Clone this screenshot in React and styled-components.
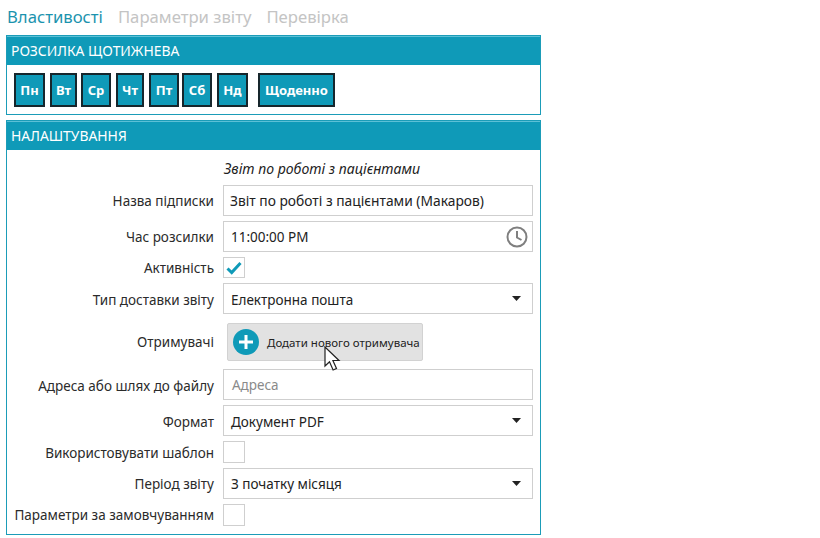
import React from 'react'
import styled, { createGlobalStyle } from 'styled-components'

const days = [
  { name: 'Пн', width: 31, gap: 5 },
  { name: 'Вт', width: 27, gap: 4 },
  { name: 'Ср', width: 30, gap: 5 },
  { name: 'Чт', width: 28, gap: 5 },
  { name: 'Пт', width: 30, gap: 3 },
  { name: 'Сб', width: 30, gap: 5 },
  { name: 'Нд', width: 31, gap: 10 },
]

const Caret = () => (
  <CaretIcon width="9" height="5" viewBox="0 0 10 6" preserveAspectRatio="none">
    <path d="M0 0h10L5 6z" fill="#222" />
  </CaretIcon>
)

const ClockIcon = () => (
  <ClockWrap width="22" height="22" viewBox="0 0 22 22" fill="none" stroke="#7f7f7f" strokeWidth="2">
    <circle cx="11" cy="11" r="9.5" />
    <path d="M11 5v6.5l4.5 2.5" />
  </ClockWrap>
)

const App = () => {
  return (
    <Page>
      <GlobalStyle />
      <Tabs>
        <Tab $active>Властивості</Tab>
        <Tab>Параметри звіту</Tab>
        <Tab>Перевірка</Tab>
      </Tabs>

      <Panel>
        <PanelHeader>РОЗСИЛКА ЩОТИЖНЕВА</PanelHeader>
        <DayRow>
          {days.map(day => (
            <DayBtn key={day.name} $width={day.width} $gap={day.gap}>{day.name}</DayBtn>
          ))}
          <DayBtn $width={77}>Щоденно</DayBtn>
        </DayRow>
      </Panel>

      <Panel>
        <PanelHeader>НАЛАШТУВАННЯ</PanelHeader>
        <Form>
          <Subtitle>Звіт по роботі з пацієнтами</Subtitle>

          <Row>
            <Label>Назва підписки</Label>
            <NameField>Звіт по роботі з пацієнтами (Макаров)</NameField>
          </Row>
          <Row>
            <Label>Час розсилки</Label>
            <Field>11:00:00 PM<ClockIcon /></Field>
          </Row>
          <Row>
            <Label>Активність</Label>
            <Check $height={21}>
              <svg width="16" height="14" viewBox="0 0 16 14">
                <path d="M1.5 7.5l4.2 4L14.5 2" fill="none" stroke="#0f9ab8" strokeWidth="3" />
              </svg>
            </Check>
          </Row>
          <Row>
            <LowLabel>Тип доставки звіту</LowLabel>
            <Field><LowText>Електронна пошта</LowText><Caret /></Field>
          </Row>
          <ButtonRow>
            <Label>Отримувачі</Label>
            <AddBtn>
              <PlusCircle>
                <svg width="16" height="16" viewBox="0 0 16 16">
                  <path d="M8 1v14M1 8h14" stroke="#fff" strokeWidth="3" />
                </svg>
              </PlusCircle>
              Додати нового отримувача
              <Cursor width="17" height="26" viewBox="0 0 17 26">
                <path
                  d="M1 1v19l4.5-4.2 3.6 8.2 3.4-1.5-3.6-8H15z"
                  fill="#fff"
                  stroke="#222"
                  strokeWidth="1.2"
                  strokeLinejoin="miter"
                />
              </Cursor>
            </AddBtn>
          </ButtonRow>
          <Row>
            <LowLabel>Адреса або шлях до файлу</LowLabel>
            <PlaceholderField>Адреса</PlaceholderField>
          </Row>
          <Row>
            <LowLabel>Формат</LowLabel>
            <Field><LowText>Документ PDF</LowText><Caret /></Field>
          </Row>
          <Row>
            <LowLabel>Використовувати шаблон</LowLabel>
            <Check />
          </Row>
          <Row>
            <Label>Період звіту</Label>
            <Field>З початку місяця<Caret /></Field>
          </Row>
          <Row>
            <Label>Параметри за замовчуванням</Label>
            <Check />
          </Row>
        </Form>
      </Panel>
    </Page>
  )
}

export default App

const GlobalStyle = createGlobalStyle`
  html, body {
    margin: 0;
    background: #fff;
  }
  body {
    font-family: "Noto Sans", "Open Sans", sans-serif;
    color: #222;
  }
`
const Page = styled.div`
  width: 820px;
  height: 538px;
  padding: 3px 0 0 6px;
  box-sizing: border-box;
  overflow: hidden;
`
const Tabs = styled.div`
  display: flex;
  gap: 15px;
  height: 32px;
  padding: 3px 0 0 1px;
  box-sizing: border-box;
  align-items: flex-start;
`
const Tab = styled.span`
  font-size: 16.7px;
  line-height: 22px;
  color: ${props => (props.$active ? '#1b93ae' : '#c4c4c4')};
`
const Panel = styled.section`
  width: 535px;
  box-sizing: border-box;
  border: 1px solid #1b9cb8;
  margin-bottom: 5px;
`
const PanelHeader = styled.h2`
  margin: 0;
  height: 29px;
  padding-left: 4px;
  background: #0f9ab8;
  border-top: 1px solid #5cc0d6;
  box-sizing: border-box;
  font-size: 13.9px;
  font-weight: 400;
  line-height: 27px;
  color: #fff;
`
const DayRow = styled.div`
  display: flex;
  height: 49px;
  padding: 8px 0 0 7px;
  box-sizing: border-box;
`
const DayBtn = styled.button`
  width: ${props => props.$width}px;
  height: 34px;
  margin-right: ${props => props.$gap || 0}px;
  padding: 0;
  background: #0f9ab8;
  border: 2px solid #16262c;
  font-family: inherit;
  font-size: 13px;
  font-weight: 700;
  color: #fff;
`
const Form = styled.div`
  height: 384px;
  padding: 0 7px 0 0;
  box-sizing: border-box;
`
const Subtitle = styled.div`
  height: 35px;
  padding: 10px 0 0 217px;
  box-sizing: border-box;
  font-size: 14.1px;
  line-height: 18px;
  font-style: italic;
  color: #222;
`
const Row = styled.div`
  display: grid;
  grid-template-columns: 207px 1fr;
  column-gap: 9px;
  align-items: center;
  margin-bottom: 5px;
`
const ButtonRow = styled(Row)`
  margin: 9px 0 8px;
`
const Label = styled.label`
  text-align: right;
  font-size: 13.5px;
  line-height: 18px;
  color: #2b2b2b;
  white-space: nowrap;
`
const LowLabel = styled(Label)`
  padding-top: 2px;
`
const Field = styled.div`
  display: flex;
  align-items: center;
  justify-content: space-between;
  height: 31px;
  padding: 0 7px;
  box-sizing: border-box;
  border: 1px solid #cfcfcf;
  font-size: 13.5px;
  color: #222;
`
const LowText = styled.span`
  padding-top: 2px;
`
const NameField = styled(Field)`
  padding-left: 6px;
  font-size: 13.8px;
`
const PlaceholderField = styled(Field)`
  padding-left: 8px;
  color: #8a8a8a;
`
const CaretIcon = styled.svg`
  margin-right: 4px;
`
const ClockWrap = styled.svg`
  margin-right: -3px;
`
const Check = styled.div`
  display: flex;
  align-items: center;
  justify-content: center;
  width: 22px;
  height: ${props => props.$height || 22}px;
  box-sizing: border-box;
  border: 1px solid #cfcfcf;
`
const AddBtn = styled.button`
  position: relative;
  display: flex;
  align-items: center;
  gap: 8px;
  width: 196px;
  height: 38px;
  margin-left: 4px;
  padding: 0 0 0 5px;
  box-sizing: border-box;
  background: #e2e2e2;
  border: 1px solid #d2d2d2;
  border-radius: 2px;
  font-family: inherit;
  font-size: 11.5px;
  color: #222;
  white-space: nowrap;
`
const PlusCircle = styled.span`
  display: flex;
  align-items: center;
  justify-content: center;
  width: 26px;
  height: 26px;
  border-radius: 50%;
  background: #0f9ab8;
`
const Cursor = styled.svg`
  position: absolute;
  left: 96px;
  top: 22px;
`
